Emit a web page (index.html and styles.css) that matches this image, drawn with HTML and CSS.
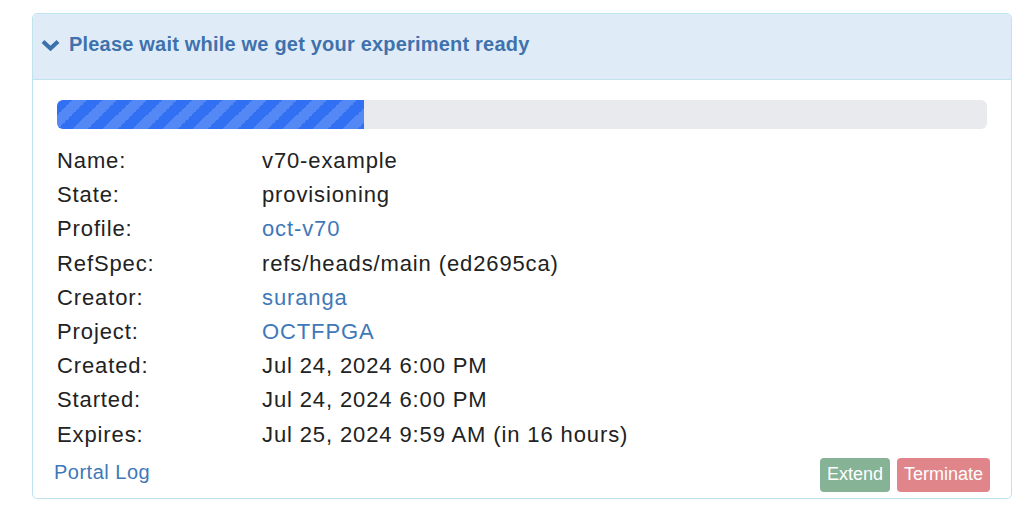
FILE: index.html
```html
<!DOCTYPE html>
<html>
<head>
<meta charset="utf-8">
<link rel="stylesheet" href="styles.css">
</head>
<body>
<div class="panel">
  <div class="panel-heading">
    <svg class="chev" width="19" height="13" viewBox="0 0 19 13"><path d="M2 2.5 L9.5 9.5 L17 2.5" fill="none" stroke="#3d71ac" stroke-width="4.2" stroke-linecap="butt" stroke-linejoin="miter"/></svg>
    <span class="title">Please wait while we get your experiment ready</span>
  </div>
  <div class="panel-body">
    <div class="progress"><div class="bar" style="width:33%"></div></div>
    <div class="info">
      <div class="label">Name:</div><div class="value">v70-example</div>
      <div class="label">State:</div><div class="value">provisioning</div>
      <div class="label">Profile:</div><div class="value"><a class="link">oct-v70</a></div>
      <div class="label">RefSpec:</div><div class="value">refs/heads/main (ed2695ca)</div>
      <div class="label">Creator:</div><div class="value"><a class="link">suranga</a></div>
      <div class="label">Project:</div><div class="value"><a class="link">OCTFPGA</a></div>
      <div class="label">Created:</div><div class="value">Jul 24, 2024 6:00 PM</div>
      <div class="label">Started:</div><div class="value">Jul 24, 2024 6:00 PM</div>
      <div class="label">Expires:</div><div class="value">Jul 25, 2024 9:59 AM (in 16 hours)</div>
    </div>
    <div class="footer">
      <a class="link portal">Portal Log</a>
      <div class="buttons">
        <button class="btn extend">Extend</button>
        <button class="btn terminate">Terminate</button>
      </div>
    </div>
  </div>
</div>
</body>
</html>
```
FILE: styles.css
```css
html, body {
  margin: 0;
  padding: 0;
  background: #ffffff;
}
body {
  font-family: "Liberation Sans", Arial, Helvetica, sans-serif;
  color: #222222;
  padding: 13px 12px 0 32px;
}
.panel {
  width: 978px;
  border: 1px solid #bfe4ee;
  border-radius: 5px;
  overflow: hidden;
}
.panel-heading {
  height: 66px;
  background: #dfecf7;
  border-bottom: 1px solid #bfe4ee;
  display: flex;
  align-items: center;
  padding-left: 8px;
  box-sizing: border-box;
}
.chev {
  margin-right: 9px;
  margin-top: -3px;
}
.title {
  font-size: 20px;
  font-weight: bold;
  letter-spacing: 0.2px;
  color: #3f72ad;
  margin-top: -5px;
}
.panel-body {
  padding: 20px 24px 6px 24px;
}
.progress {
  height: 29px;
  background: #e9eaee;
  border-radius: 6px;
  overflow: hidden;
}
.bar {
  height: 100%;
  background-color: #3170f2;
  background-image: linear-gradient(-45deg, rgba(255,255,255,.17) 25%, transparent 25%, transparent 50%, rgba(255,255,255,.17) 50%, rgba(255,255,255,.17) 75%, transparent 75%, transparent);
  background-size: 30px 30px;
}
.info {
  display: grid;
  grid-template-columns: 205px 1fr;
  margin-top: 15px;
  font-size: 22px;
  letter-spacing: 0.88px;
  line-height: 34.2px;
}
.link {
  color: #3f78b9;
  text-decoration: none;
}
.footer {
  display: flex;
  justify-content: space-between;
  align-items: center;
  margin-top: 6px;
}
.portal {
  font-size: 20px;
  letter-spacing: 0.5px;
  margin-left: -3px;
  margin-top: -5px;
}
.buttons {
  display: flex;
  gap: 7px;
  margin-right: -3px;
}
.btn {
  font-family: "Liberation Sans", Arial, sans-serif;
  font-size: 18px;
  color: #ffffff;
  border: none;
  border-radius: 4px;
  height: 34px;
  padding: 0 7px;
}
.extend {
  background: #86b296;
}
.terminate {
  background: #e0868a;
}
```
